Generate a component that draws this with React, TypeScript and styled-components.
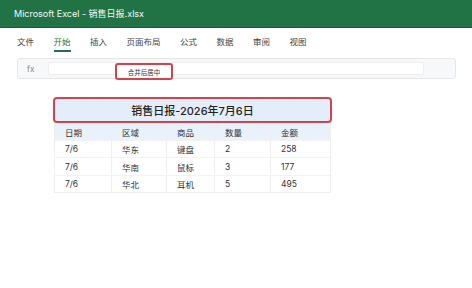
import * as React from 'react';
import styled, { createGlobalStyle } from 'styled-components';

const GlobalStyle = createGlobalStyle`
  html, body {
    margin: 0;
    padding: 0;
    background: #fff;
    font-family: Inter, "Noto Sans CJK SC", sans-serif;
  }
`;

const Page = styled.div`
  width: 472px;
  height: 288px;
  display: flex;
  flex-direction: column;
  overflow: hidden;
`;

const TitleBar = styled.header`
  height: 27px;
  display: flex;
  align-items: center;
  padding-left: 14px;
  background: #217346;
  border-bottom: 1px solid #1b5e3a;
  color: #f4f8f5;
  font-size: 9px;
`;

const Tabs = styled.nav`
  display: flex;
  gap: 19.5px;
  padding: 8px 0 0 17px;
`;

const Tab = styled.div<{ $active?: boolean }>`
  font-size: 8.5px;
  line-height: 12px;
  padding-bottom: 2px;
  color: ${p => (p.$active ? '#217346' : '#444')};
  border-bottom: 2px solid ${p => (p.$active ? '#217346' : 'transparent')};
`;

const FormulaBar = styled.div`
  position: relative;
  margin: 6px 16px 0 17px;
  height: 19px;
  display: flex;
  align-items: center;
  padding: 0 31px 0 9px;
  background: #f7f8f9;
  border: 1px solid #e4e6e8;
  border-radius: 3px;
`;

const Fx = styled.span`
  width: 21px;
  font-size: 8px;
  color: #888;
`;

const FormulaInput = styled.div`
  flex: 1;
  height: 11px;
  background: #fff;
  border: 1px solid #eceef0;
  border-radius: 2px;
`;

const MergeTip = styled.div`
  position: absolute;
  left: 97px;
  top: 4px;
  width: 54px;
  height: 13px;
  display: flex;
  align-items: center;
  justify-content: center;
  background: #fff;
  border: 2px solid #d2444c;
  border-radius: 3px;
  font-size: 6.5px;
  color: #333;
`;

const Sheet = styled.div`
  margin: 19px 0 0 54px;
  width: 277px;
  display: flex;
  flex-direction: column;
  border-left: 1px solid #eeeeee;
  border-bottom: 1px solid #eeeeee;
  border-right: 1px solid #eeeeee;
  box-sizing: border-box;
`;

const MergedTitle = styled.div`
  margin: -1px -2px 0;
  height: 22px;
  display: flex;
  align-items: center;
  justify-content: center;
  background: #e4eefa;
  border: 2px solid #d2444c;
  border-radius: 4px;
  font-size: 11px;
  font-weight: 500;
  color: #222;
`;

const Row = styled.div<{ $head?: boolean }>`
  display: grid;
  grid-template-columns: 57px 55px 48px 56px 1fr;
  height: ${p => (p.$head ? '17px' : '17.4px')};
  background: ${p => (p.$head ? '#e9f1fb' : '#fff')};
  border-top: ${p => (p.$head ? 'none' : '1px solid #f2f2f2')};
  box-sizing: border-box;
`;

const Cell = styled.div`
  display: flex;
  align-items: center;
  padding-left: 10px;
  font-size: 8.5px;
  color: #333;
  border-right: 1px solid #efefef;
  &:last-child {
    border-right: none;
  }
`;

const tabs = ['文件', '开始', '插入', '页面布局', '公式', '数据', '审阅', '视图'];
const head = ['日期', '区域', '商品', '数量', '金额'];
const rows = [
  ['7/6', '华东', '键盘', '2', '258'],
  ['7/6', '华南', '鼠标', '3', '177'],
  ['7/6', '华北', '耳机', '5', '495'],
];

const App = () => {
  return (
    <Page>
      <GlobalStyle />
      <TitleBar>Microsoft Excel - 销售日报.xlsx</TitleBar>
      <Tabs>
        {tabs.map(t => (
          <Tab key={t} $active={t === '开始'}>{t}</Tab>
        ))}
      </Tabs>
      <FormulaBar>
        <Fx>fx</Fx>
        <FormulaInput />
        <MergeTip>合并后居中</MergeTip>
      </FormulaBar>
      <Sheet>
        <MergedTitle>销售日报-2026年7月6日</MergedTitle>
        <Row $head>
          {head.map(h => <Cell key={h}>{h}</Cell>)}
        </Row>
        {rows.map((r, i) => (
          <Row key={i}>
            {r.map((c, j) => <Cell key={j}>{c}</Cell>)}
          </Row>
        ))}
      </Sheet>
    </Page>
  );
};

export default App;
